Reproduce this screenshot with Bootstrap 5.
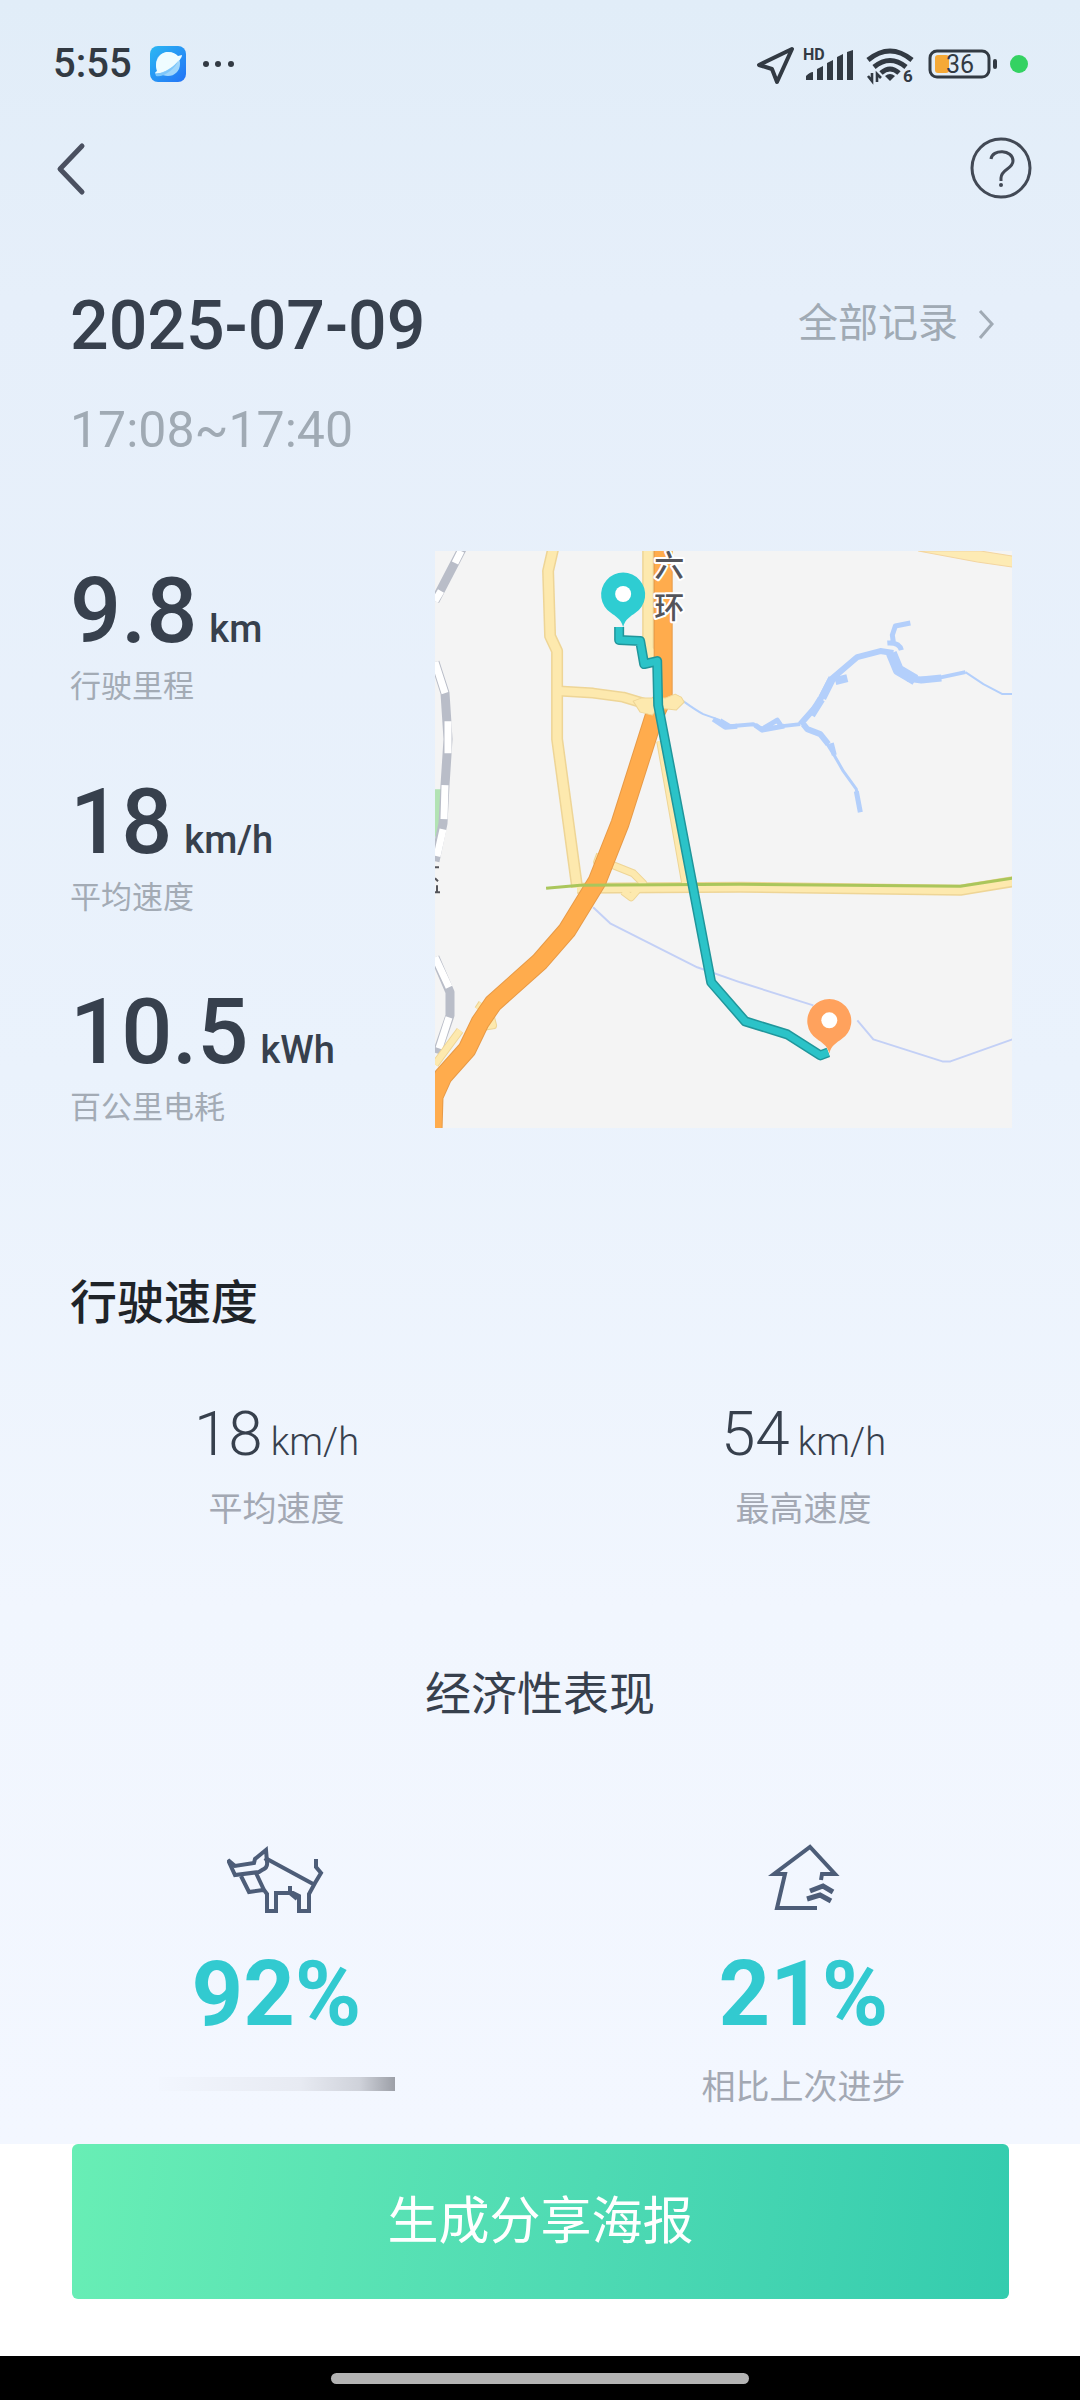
<!DOCTYPE html>
<html lang="zh-CN">
<head>
<meta charset="utf-8">
<meta name="viewport" content="width=device-width, initial-scale=1">
<title>行驶记录</title>
<link href="https://cdn.jsdelivr.net/npm/bootstrap@5.3.0/dist/css/bootstrap.min.css" rel="stylesheet">
<style>
  body { font-family: Roboto, "Noto Sans CJK SC", sans-serif; color: #37404d; background: #fff; }
  svg { display: block; flex: none; }
  .trip-panel { background: linear-gradient(#e1edf8, #e6effa 14%, #eaf2fc 50%, #f1f6fe 75%, #f3f7ff); padding-bottom: 36px; }
  .status-bar { height: 128px; padding: 0 52px 0 53px; color: #323a43; }
  .clock { font-size: 40px; line-height: 48px; font-weight: 500; margin-right: 18px; }
  .top-nav { height: 80px; padding: 0 48px 0 50px; }
  .trip-head { padding: 78px 84px 0 70px; }
  .trip-date { font-size: 68px; line-height: 80px; font-weight: 500; margin: 0; }
  .all-link { font-size: 40px; line-height: 60px; color: #a0aab4; gap: 18px; padding-top: 8px; }
  .trip-time { font-size: 50px; line-height: 60px; color: #a0aab4; margin-top: 34px; }
  .trip-body { padding: 91px 68px 0 70px; }
  .stat-col { padding-top: 13px; }
  .stat-num { font-size: 90px; line-height: 96px; font-weight: 500; }
  .stat-unit { font-size: 38px; line-height: 40px; font-weight: 500; margin-left: 12px; }
  .stat-name { font-size: 31px; line-height: 40px; margin-top: 7px; color: #a3abb5; }
  .map-box { width: 61.3%; aspect-ratio: 1; }
  .speed-title { font-size: 47px; line-height: 60px; font-weight: 500; color: #1f2429; margin: 145px 70px 0; }
  .pair-row { margin: 0 13px; }
  .speed-row { padding-top: 66px; }
  .speed-num { font-size: 62px; line-height: 70px; font-weight: 300; }
  .speed-unit { font-size: 38px; line-height: 40px; font-weight: 300; margin-left: 8px; }
  .pair-name { font-size: 34px; line-height: 40px; color: #a3a8b3; }
  .speed-name { margin-top: 20px; }
  .eco-title { font-size: 46px; line-height: 60px; font-weight: 400; margin: 135px 0 0; }
  .eco-row { padding-top: 115px; }
  .eco-num { font-size: 90px; line-height: 90px; font-weight: 700; color: #32cad0; margin: 31px 0 27px; }
  .faded-name { width: 236px; height: 14px; margin-top: 10px; background: linear-gradient(90deg, #f2f6fe, #e7eaf2 60%, #cfd2da 85%, #9c9fa7); }
  .share-wrap { padding: 0 71px 57px 72px; }
  .share-btn { height: 155px; font-size: 51px; line-height: 60px; border: 0; border-radius: 6px; color: #fff; background: linear-gradient(98deg, #68eeb5, #4edab3 55%, #34ccae); }
  .home-strip { height: 44px; background: #000; padding-top: 17px; }
  .home-pill { width: 38.7%; height: 11px; border-radius: 6px; background: #b3b3b3; }
</style>
</head>
<body>
<div class="min-vh-100 d-flex flex-column">
  <main class="trip-panel flex-grow-1">
    <div class="status-bar d-flex align-items-center justify-content-between">
      <div class="d-flex align-items-center">
        <span class="clock">5:55</span>
        <svg width="36" height="36" viewBox="0 0 36 36" aria-hidden="true">
          <defs><linearGradient id="app" x1="0" y1="0" x2="1" y2="1"><stop offset="0" stop-color="#2bb8f3"/><stop offset="1" stop-color="#2373f6"/></linearGradient></defs>
          <rect width="36" height="36" rx="8" fill="url(#app)"/>
          <circle cx="18" cy="18" r="12" fill="#9fd6fb"/>
          <path d="M7 25C4 16 9 6 18 6c5 0 8 2 10 4l4-1c0 5-12 16-25 19-3 0-2-2 0-3Z" fill="#effcff"/>
          <path d="M5 27c7 2 18-5 24-13-4 9-16 18-23 16Z" fill="#7dc7fb"/>
        </svg>
        <svg class="ms-3" width="34" height="8" viewBox="0 0 34 8" fill="#323a43" aria-hidden="true"><circle cx="4" cy="4" r="3"/><circle cx="16" cy="4" r="3"/><circle cx="29" cy="4" r="3"/></svg>
      </div>
      <svg width="272" height="44" viewBox="756 42 272 44" fill="none" stroke="#323a43" role="img" aria-label="HD 36">
        <path d="M792 49 759 65l13 4 5 13Z" stroke-width="4" stroke-linejoin="round"/>
        <text x="803" y="60" font-size="16" font-weight="700" fill="#323a43" stroke="none">HD</text>
        <g fill="#323a43" stroke="none"><path d="M806 80v-4q4-4 7-4v8ZM817 80V69l6-3v14ZM827 80V63l6-3v20ZM837 80V57l6-3v26ZM847 80V52l6-2v30Z"/></g>
        <path d="M868 60q22-18 44 0M874 67q16-13 32 0M881 73q9-8 18 0" stroke-width="5"/>
        <path d="M885 76q5-4 10 0l-5 5Z" fill="#323a43" stroke="none"/>
        <path d="M872 73v8l-4-5M877 82v-8l4 4" stroke-width="2.6"/>
        <text x="903" y="82" font-size="17" font-weight="700" fill="#323a43" stroke="none">6</text>
        <rect x="930" y="51" width="59" height="26" rx="7" stroke-width="3"/>
        <rect x="935" y="55" width="14" height="18" rx="3" fill="#f5a937" stroke="none"/>
        <rect x="993" y="59" width="4" height="10" rx="2" fill="#323a43" stroke="none"/>
        <text x="960" y="73" font-size="25" font-weight="400" text-anchor="middle" fill="#323a43" stroke="none">36</text>
        <circle cx="1019" cy="64" r="9" fill="#34d262" stroke="none"/>
      </svg>
    </div>

    <nav class="top-nav d-flex align-items-center justify-content-between">
      <button type="button" class="btn p-0 border-0" aria-label="返回">
        <svg width="40" height="56" viewBox="0 0 40 56" fill="none" stroke="#4a5060" stroke-width="5" stroke-linecap="round" stroke-linejoin="round"><path d="M32 6 10 29l22 23"/></svg>
      </button>
      <button type="button" class="btn p-0 border-0" aria-label="帮助">
        <svg width="62" height="62" viewBox="0 0 62 62" fill="none" stroke="#424955"><circle cx="31" cy="31" r="29" stroke-width="3"/><path d="M21 22c1-10 22-10 22 2 0 8-12 8-12 17v3" stroke-width="3"/><circle cx="31" cy="48" r="2" fill="#424955" stroke="none"/></svg>
      </button>
    </nav>

    <header class="trip-head">
      <div class="d-flex justify-content-between align-items-start">
        <h1 class="trip-date">2025-07-09</h1>
        <a href="#" class="all-link d-flex align-items-center text-decoration-none">全部记录
          <svg width="20" height="34" viewBox="0 0 20 34" fill="none" stroke="#a0aab4" stroke-width="3"><path d="m4 4 12 13L4 31"/></svg>
        </a>
      </div>
      <div class="trip-time">17:08~17:40</div>
    </header>

    <section class="trip-body d-flex justify-content-between">
      <div class="stat-col d-flex flex-column justify-content-between">
        <div><div class="stat-num">9.8<span class="stat-unit">km</span></div><div class="stat-name">行驶里程</div></div>
        <div><div class="stat-num">18<span class="stat-unit">km/h</span></div><div class="stat-name">平均速度</div></div>
        <div><div class="stat-num">10.5<span class="stat-unit">kWh</span></div><div class="stat-name">百公里电耗</div></div>
      </div>
      <div class="map-box">
        <svg width="100%" viewBox="0 0 577 577" fill="none" stroke-linejoin="round" role="img" aria-label="行驶路线地图">
          <rect width="577" height="577" fill="#f4f4f4"/>
          <path d="M0 238h6l-1 35-5 14Z" fill="#b2e3b4"/>
          <!-- railway -->
          <path d="M27-2 0 50M0 111l10 31 3 46-3 46-2 38-8 38M0 406l15 35v23L2 502" stroke="#b9bdc8" stroke-width="9"/>
          <path d="M26 0 20 12M6 40 0 50M0 111l10 31M13 170v32M10 234l-1 34M8 278l-6 27M0 406l14 30M14 466 4 497" stroke="#fff" stroke-width="7"/>
          <path d="M0 316h4M0 327l3 3M0 341h5M2 334v6" stroke="#54545a" stroke-width="2"/>
          <!-- water -->
          <g stroke="#b3cffb">
            <path d="M248 150q14 10 20 13l17 6M530 121l18 12 19 10h10" stroke-width="2"/>
            <path d="m285 169 10 6 23-2 9 5 20-3 18-2" stroke-width="4"/>
            <path d="m278 168 12 8 12-1M327 178l10-6 5-3 4 6M320 174l7 5 22-4" stroke-width="5"/>
            <path d="m365 173 17-19 13-25 27-23 23-6 13 2" stroke-width="6"/>
            <path d="m376 164 10-16M387 147l10-20M400 130l12-3" stroke-width="8"/>
            <path d="m456 102 7 17 17 10" stroke-width="11"/>
            <path d="m478 128 24-1 28-6" stroke-width="4"/><path d="m472 127 14 2 20-2" stroke-width="7"/>
            <path d="M452 92q12-1 14 7M458 91l-1-7 3-9 15-3" stroke-width="5"/>
            <path d="m368 173 4 5 13 5 8 10" stroke-width="6"/>
            <path d="m390 190 10 16 8 14 13 18 2 12" stroke-width="3"/><path d="m396 192 3 12M421 240l4 21" stroke-width="5"/>
          </g>
          <path d="m158 356 17 16 87 44 43 15 73 23M422 469l16 19 69 22h8l62-22" stroke="#c3d0f6" stroke-width="2"/>
          <!-- secondary roads -->
          <g stroke="#eed596" stroke-width="12"><path d="M118-2 113 20l2 65 7 15v88l20 148M213-2v100l8 12"/><path d="m124 140 34 2 30 4 20 6 10 3M142 337l163-1 220 3 55-9" stroke-width="11"/><path d="m225 190 25 142M165 303l-3 8 8 4M178 314l20 8 10 10-12 14-8-6M25 479 0 513M47 452l-4 6M45 476l13-2-2-8" stroke-width="8"/></g>
          <g stroke="#fde9ae" stroke-width="9"><path d="M118-2 113 20l2 65 7 15v88l20 148M213-2v100l8 12"/><path d="m124 140 34 2 30 4 20 6 10 3M142 337l163-1 220 3 55-9" stroke-width="8"/><path d="m225 190 25 142M165 303l-3 8 8 4M178 314l20 8 10 10-12 14-8-6M25 479 0 513M47 452l-4 6M45 476l13-2-2-8" stroke-width="6"/></g>
          <path d="M483 0h62l32 5v11l-35-5Z" fill="#fdebb4" stroke="#f3d5a0"/>
          <!-- ring expressway -->
          <path d="M228-2v148l-9 19-34 107-23 58-30 49-27 31-47 42-13 19-13 27-24 27-9 20-1 34" stroke="#e79a47" stroke-width="19"/>
          <path d="M228-2v148l-9 19-34 107-23 58-30 49-27 31-47 42-13 19-13 27-24 27-9 20-1 34" stroke="#ffac4d" stroke-width="17"/>
          <path d="m198 150 8-3h24l10-4 6 3 3 5-8 8-18-2-6 7-12-3Z" fill="#fde9ae" stroke="#eed596"/>
          <path d="m111 337 34-3 160-1 220 2 52-8" stroke="#aac65b" stroke-width="3"/>
          <!-- driven route -->
          <path d="M184 76v13l21 1 4 23 13-3 1 44 53 277 34 39 42 13 33 21 8-3" stroke="#20969b" stroke-width="10"/>
          <path d="M184 76v13l21 1 4 23 13-3 1 44 53 277 34 39 42 13 33 21 8-3" stroke="#2bc3c8" stroke-width="7"/>
          <path d="M188 76c-2-8-8-11-12-14a22 22 0 1 1 24 0c-4 3-10 6-12 14Z" fill="#2ecdd2"/><circle cx="188" cy="43" r="8" fill="#fff"/>
          <path d="M394 502c-2-8-8-11-12-14a22 22 0 1 1 24 0c-4 3-10 6-12 14Z" fill="#ffa25d"/><circle cx="394" cy="469" r="8" fill="#fff"/>
          <g font-size="30" font-weight="500" fill="#54545a" stroke="#fff" stroke-width="4" paint-order="stroke" text-anchor="middle"><text x="234" y="25">六</text><text x="234" y="67">环</text></g>
        </svg>
      </div>
    </section>

    <section>
      <h2 class="speed-title">行驶速度</h2>
      <div class="pair-row speed-row d-flex text-center">
        <div class="w-50"><div class="speed-num">18<span class="speed-unit">km/h</span></div><div class="pair-name speed-name">平均速度</div></div>
        <div class="w-50"><div class="speed-num">54<span class="speed-unit">km/h</span></div><div class="pair-name speed-name">最高速度</div></div>
      </div>
    </section>

    <section>
      <h2 class="eco-title text-center">经济性表现</h2>
      <div class="pair-row eco-row d-flex text-center">
        <div class="w-50 d-flex flex-column align-items-center">
          <svg width="100" height="80" viewBox="227 1840 100 80" fill="none" stroke="#4d5d78" stroke-width="4" aria-hidden="true">
            <path d="m228 1861 7 15 24-3 3-2q6-2 5-8l-1-12-11 9-1 4-19 3Z"/>
            <path d="M241 1877l8 16 14-2M256 1874l8 17 3 4v17h9v-18h17l6 3v15h10v-17l6-11 6-10-5-6v-8M265 1862l2-2 48 26M290 1887v7l7 6"/>
          </svg>
          <div class="eco-num">92%</div>
          <div class="faded-name"></div>
        </div>
        <div class="w-50 d-flex flex-column align-items-center">
          <svg width="76" height="80" viewBox="768 1840 76 80" fill="none" stroke="#4d5d78" stroke-width="4" aria-hidden="true">
            <path d="M819 1909h-40l8-34h-11l36-27 25 27h-13l-1 6"/>
            <path d="m812 1892 13-5 10 6M809 1900l13-4 11 6" stroke-width="5"/>
          </svg>
          <div class="eco-num">21%</div>
          <div class="pair-name">相比上次进步</div>
        </div>
      </div>
    </section>
  </main>

  <footer>
    <div class="share-wrap"><button type="button" class="share-btn btn w-100">生成分享海报</button></div>
    <div class="home-strip"><div class="home-pill mx-auto"></div></div>
  </footer>
</div>
<script src="https://cdn.jsdelivr.net/npm/bootstrap@5.3.0/dist/js/bootstrap.bundle.min.js"></script>
</body>
</html>
